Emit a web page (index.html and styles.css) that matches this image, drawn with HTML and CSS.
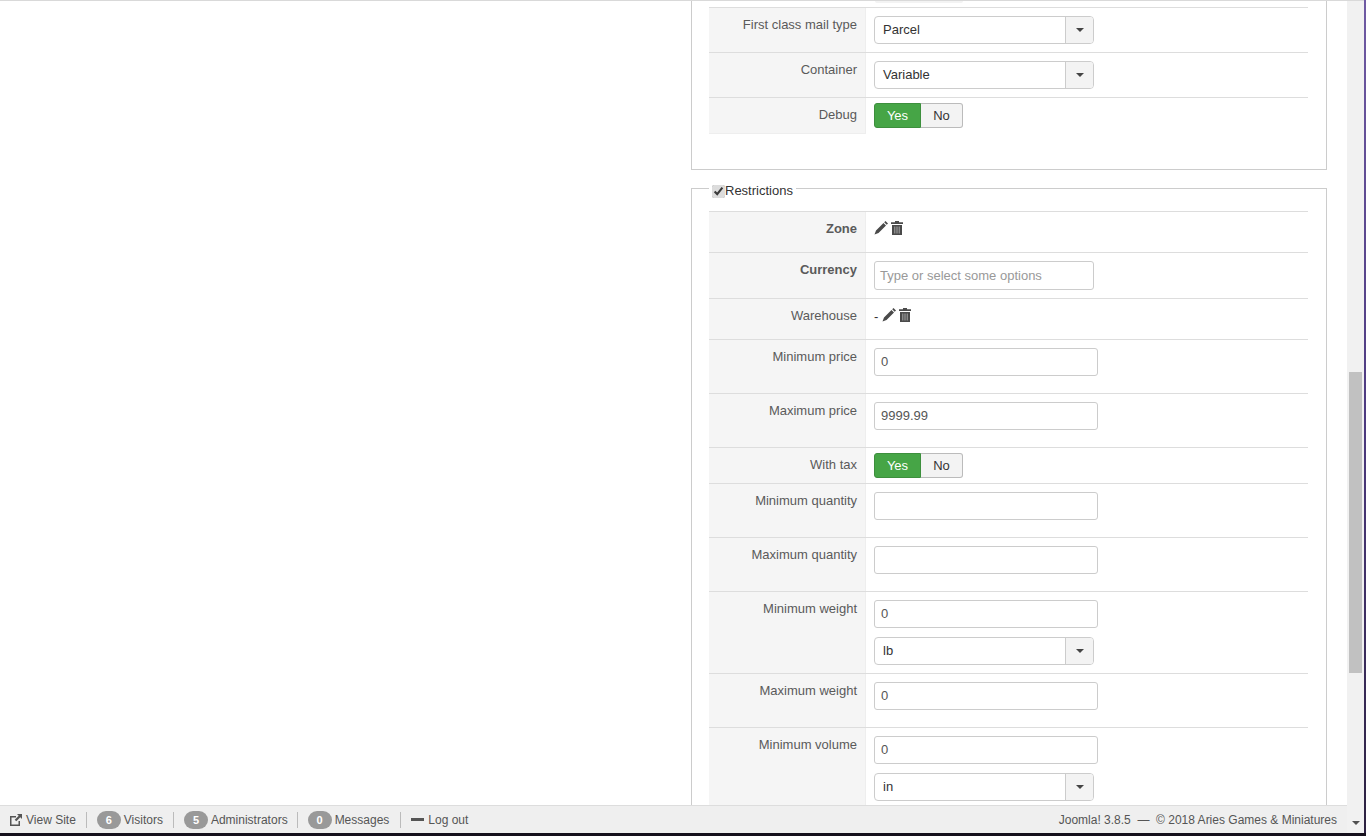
FILE: index.html
```html
<!DOCTYPE html>
<html lang="en">
<head>
<meta charset="utf-8">
<title>Shipping method</title>
<link rel="stylesheet" href="styles.css">
</head>
<body>
<div class="desktop">
  <div class="window">
    <div class="page">
      <div class="viewport">
        <main class="main">
          <div class="blank"></div>
          <div class="column">
            <fieldset class="group first">
              <div class="stub"><span class="stub-mark"></span></div>
              <div class="row">
                <div class="label">First class mail type</div>
                <div class="field"><div class="select"><span class="select-text">Parcel</span><span class="select-btn"><i class="caret"></i></span></div></div>
              </div>
              <div class="row">
                <div class="label">Container</div>
                <div class="field"><div class="select"><span class="select-text">Variable</span><span class="select-btn"><i class="caret"></i></span></div></div>
              </div>
              <div class="row last">
                <div class="label">Debug</div>
                <div class="field tight"><div class="toggle"><span class="yes">Yes</span><span class="no">No</span></div></div>
              </div>
            </fieldset>
            <fieldset class="group">
              <legend class="legend"><input type="checkbox" class="check" checked>Restrictions</legend>
              <div class="row">
                <div class="label strong">Zone</div>
                <div class="field icons">
                  <svg class="icon" viewBox="0 0 14 14" width="14" height="14"><path d="M11.500 0L14 2.500l-1.300 1.300-2.500-2.500zM9.500 2L12 4.500l-7.500 7.500L.5 13.500 2 9.500z" fill="#4a4a4a"/></svg>
                  <svg class="icon trash" viewBox="0 0 12 14" width="12" height="14"><path d="M4 0h4v1.300h4v1.700H0V1.300h4z" fill="#4a4a4a"/><path d="M1 4h10v10H1z" fill="#4a4a4a"/><path d="M3.300 5.500h1v7h-1zM5.500 5.500h1v7h-1zM7.700 5.500h1v7h-1z" fill="#a8a8a8"/></svg>
                </div>
              </div>
              <div class="row">
                <div class="label strong">Currency</div>
                <div class="field"><div class="multi">Type or select some options</div></div>
              </div>
              <div class="row">
                <div class="label">Warehouse</div>
                <div class="field icons"><span class="dash">-</span>
                  <svg class="icon" viewBox="0 0 14 14" width="14" height="14"><path d="M11.500 0L14 2.500l-1.300 1.300-2.500-2.500zM9.500 2L12 4.500l-7.500 7.500L.5 13.500 2 9.500z" fill="#4a4a4a"/></svg>
                  <svg class="icon trash" viewBox="0 0 12 14" width="12" height="14"><path d="M4 0h4v1.300h4v1.700H0V1.300h4z" fill="#4a4a4a"/><path d="M1 4h10v10H1z" fill="#4a4a4a"/><path d="M3.300 5.500h1v7h-1zM5.500 5.500h1v7h-1zM7.700 5.500h1v7h-1z" fill="#a8a8a8"/></svg>
                </div>
              </div>
              <div class="row">
                <div class="label">Minimum price</div>
                <div class="field"><div class="input">0</div></div>
              </div>
              <div class="row">
                <div class="label">Maximum price</div>
                <div class="field"><div class="input">9999.99</div></div>
              </div>
              <div class="row">
                <div class="label">With tax</div>
                <div class="field tight"><div class="toggle"><span class="yes">Yes</span><span class="no">No</span></div></div>
              </div>
              <div class="row">
                <div class="label">Minimum quantity</div>
                <div class="field"><div class="input"></div></div>
              </div>
              <div class="row">
                <div class="label">Maximum quantity</div>
                <div class="field"><div class="input"></div></div>
              </div>
              <div class="row">
                <div class="label">Minimum weight</div>
                <div class="field"><div class="input">0</div><div class="select"><span class="select-text">lb</span><span class="select-btn"><i class="caret"></i></span></div></div>
              </div>
              <div class="row">
                <div class="label">Maximum weight</div>
                <div class="field"><div class="input">0</div></div>
              </div>
              <div class="row">
                <div class="label">Minimum volume</div>
                <div class="field"><div class="input">0</div><div class="select"><span class="select-text">in</span><span class="select-btn"><i class="caret"></i></span></div></div>
              </div>
            </fieldset>
          </div>
        </main>
        <footer class="status">
          <div class="status-left">
            <a class="item">
              <svg class="ext" viewBox="0 0 12 12" width="12" height="12"><path d="M0 2h6v1.500H1.500v7h7V7H10v5H0z" fill="#555"/><path d="M7 0h5v5l-1.700-1.700-4 4-1.600-1.600 4-4z" fill="#555"/></svg>View Site</a>
            <a class="item"><span class="badge">6</span>Visitors</a>
            <a class="item tighter"><span class="badge">5</span>Administrators</a>
            <a class="item wider"><span class="badge">0</span>Messages</a>
            <a class="item"><i class="minus"></i>Log out</a>
          </div>
          <div class="status-right">Joomla! 3.8.5 &nbsp;— &nbsp;© 2018 Aries Games &amp; Miniatures</div>
        </footer>
      </div>
      <div class="scrollbar">
        <div class="track-top"></div>
        <div class="thumb"></div>
        <div class="track-bottom"><i class="arrow"></i></div>
      </div>
    </div>
  </div>
  <div class="wall-right"></div>
</div>
<div class="wall-bottom"></div>
</body>
</html>
```
FILE: styles.css
```css
* { box-sizing: border-box; }
html, body { margin: 0; height: 100%; overflow: hidden; }
body {
  display: flex;
  flex-direction: column;
  background: #1a1422;
  font-family: "Liberation Sans", Arial, sans-serif;
  font-size: 13px;
  line-height: 18px;
  color: #333;
}
.desktop { flex: 1; display: flex; min-height: 0; }
.wall-bottom { height: 3px; background: #15101c; }
.wall-right { width: 2px; background: linear-gradient(#6f5aa3, #4d3a80 50%, #2c2140); }
.window { flex: 1; min-width: 0; display: flex; flex-direction: column; }
.page { flex: 1; display: flex; min-height: 0; background: #fff; border-top: 1px solid #d9d9d9; }
.viewport { flex: 1; min-width: 0; display: flex; flex-direction: column; }
.main { flex: 1; min-height: 0; overflow: hidden; display: flex; }
.blank { width: 691px; flex: none; }
.column { width: 636px; flex: none; }

.group {
  margin: 0 0 9px;
  padding: 14px 18px 35px 17px;
  border: 1px solid #ccc;
  min-width: 0;
}
.group.first { padding-top: 0; border-top: 0; }
.legend { padding: 6px 3px 0; margin: 0; height: 18px; color: #333; display: flex; align-items: center; }
.check { width: 13px; height: 13px; margin: 0; accent-color: #dcdcdc; }

.stub { height: 6px; padding-left: 166px; }
.stub-mark { display: block; width: 88px; height: 2px; background: #f3f3f3; border-radius: 0 0 4px 4px; }

.row { display: flex; border-top: 1px solid #ddd; }
.label {
  width: 157px;
  flex: none;
  padding: 8px 8px 0 0;
  text-align: right;
  color: #5a5a5a;
  background: #f5f5f5;
  border-right: 1px solid #eee;
}
.strong { font-weight: bold; }
.row.last .label { border-bottom: 1px solid #eee; }
.field { flex: 1; padding: 8px; }
.field.tight { padding: 5px 8px; }
.row.last .field.tight { padding-bottom: 6px; }
.field.icons { display: flex; align-items: flex-start; height: 40px; padding-top: 9px; gap: 2px; }
.dash { margin-right: 2px; color: #333; line-height: 14px; padding-top: 2px; }
.icon { flex: none; }
.trash { margin-left: 1px; }

.select {
  width: 220px;
  height: 28px;
  display: flex;
  border: 1px solid #ccc;
  border-radius: 4px;
  background: #fff;
}
.select-text { flex: 1; padding: 4px 8px; line-height: 18px; color: #333; }
.select-btn {
  width: 28px;
  display: flex;
  align-items: center;
  justify-content: center;
  background: #f3f3f3;
  border-left: 1px solid #ccc;
  border-radius: 0 3px 3px 0;
}
.caret { width: 0; height: 0; border: 4px solid transparent; border-top-color: #444; border-bottom: 0; }

.input {
  width: 224px;
  height: 28px;
  padding: 4px 6px;
  border: 1px solid #ccc;
  border-radius: 3px;
  background: #fff;
  color: #555;
  margin-bottom: 9px;
}
.multi {
  width: 220px;
  height: 29px;
  padding: 5px;
  border: 1px solid #ccc;
  border-radius: 3px;
  color: #999;
}

.toggle { display: inline-flex; height: 25px; vertical-align: top; }
.toggle span { display: flex; align-items: center; justify-content: center; line-height: 18px; }
.yes { width: 47px; background: #46a546; color: #fff; border: 1px solid #3d8f3d; border-radius: 3px 0 0 3px; }
.no { width: 42px; background: #f3f3f3; color: #333; border: 1px solid #bbb; border-left: 0; border-radius: 0 3px 3px 0; }

.status {
  flex: none;
  height: 28px;
  display: flex;
  align-items: center;
  justify-content: space-between;
  padding: 0 10px;
  background: #efefef;
  border-top: 1px solid #ddd;
  font-size: 12px;
  color: #555;
}
.status-left { display: flex; align-items: center; }
.item { display: flex; align-items: center; height: 16px; padding-right: 10px; margin-right: 10px; border-right: 1px solid #bbb; }
.item.tighter { padding-right: 9px; }
.item.wider { padding-right: 11px; }
.item:last-child { border-right: 0; }
.ext { margin-right: 4px; }
.badge {
  width: 24px;
  height: 18px;
  margin-right: 3px;
  border-radius: 9px;
  background: #999;
  color: #fff;
  font-size: 11px;
  font-weight: bold;
  text-align: center;
  line-height: 18px;
}
.minus { width: 13px; height: 3px; margin-right: 4px; background: #555; }

.scrollbar { flex: none; width: 17px; display: flex; flex-direction: column; align-items: center; background: #f1f1f1; }
.track-top { height: 371px; flex: none; }
.thumb { width: 13px; height: 301px; flex: none; background: #c1c1c1; }
.track-bottom { flex: 1; width: 100%; display: flex; align-items: flex-end; justify-content: center; padding-bottom: 8px; }
.arrow { width: 0; height: 0; border: 4px solid transparent; border-top-color: #505050; border-bottom: 0; }
```
